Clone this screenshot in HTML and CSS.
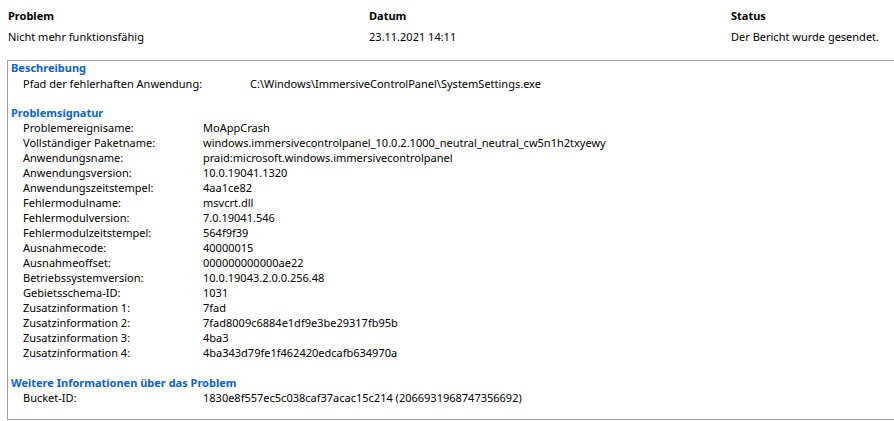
FILE: index.html
```html
<!DOCTYPE html>
<html lang="de">
<head>
<meta charset="utf-8">
<link rel="stylesheet" href="styles.css">
</head>
<body>
<div class="summary">
  <div class="col col-problem">
    <div class="head">Problem</div>
    <div class="val">Nicht mehr funktionsfähig</div>
  </div>
  <div class="col col-date">
    <div class="head">Datum</div>
    <div class="val">23.11.2021 14:11</div>
  </div>
  <div class="col col-status">
    <div class="head">Status</div>
    <div class="val">Der Bericht wurde gesendet.</div>
  </div>
</div>
<div class="details">
  <div class="section desc">
    <div class="title first">Beschreibung</div>
    <div class="row wide"><span class="label">Pfad der fehlerhaften Anwendung:</span><span class="value">C:\Windows\ImmersiveControlPanel\SystemSettings.exe</span></div>
  </div>
  <div class="section">
    <div class="title">Problemsignatur</div>
    <div class="row"><span class="label">Problemereignisame:</span><span class="value">MoAppCrash</span></div>
    <div class="row"><span class="label">Vollständiger Paketname:</span><span class="value">windows.immersivecontrolpanel_10.0.2.1000_neutral_neutral_cw5n1h2txyewy</span></div>
    <div class="row"><span class="label">Anwendungsname:</span><span class="value">praid:microsoft.windows.immersivecontrolpanel</span></div>
    <div class="row"><span class="label">Anwendungsversion:</span><span class="value">10.0.19041.1320</span></div>
    <div class="row"><span class="label">Anwendungszeitstempel:</span><span class="value">4aa1ce82</span></div>
    <div class="row"><span class="label">Fehlermodulname:</span><span class="value">msvcrt.dll</span></div>
    <div class="row"><span class="label">Fehlermodulversion:</span><span class="value">7.0.19041.546</span></div>
    <div class="row"><span class="label">Fehlermodulzeitstempel:</span><span class="value">564f9f39</span></div>
    <div class="row"><span class="label">Ausnahmecode:</span><span class="value">40000015</span></div>
    <div class="row"><span class="label">Ausnahmeoffset:</span><span class="value">000000000000ae22</span></div>
    <div class="row"><span class="label">Betriebssystemversion:</span><span class="value">10.0.19043.2.0.0.256.48</span></div>
    <div class="row"><span class="label">Gebietsschema-ID:</span><span class="value">1031</span></div>
    <div class="row"><span class="label">Zusatzinformation 1:</span><span class="value">7fad</span></div>
    <div class="row"><span class="label">Zusatzinformation 2:</span><span class="value">7fad8009c6884e1df9e3be29317fb95b</span></div>
    <div class="row"><span class="label">Zusatzinformation 3:</span><span class="value">4ba3</span></div>
    <div class="row"><span class="label">Zusatzinformation 4:</span><span class="value">4ba343d79fe1f462420edcafb634970a</span></div>
  </div>
  <div class="section">
    <div class="title">Weitere Informationen über das Problem</div>
    <div class="row"><span class="label">Bucket-ID:</span><span class="value">1830e8f557ec5c038caf37acac15c214 (2066931968747356692)</span></div>
  </div>
</div>
</body>
</html>
```
FILE: styles.css
```css
html, body {
  margin: 0;
  padding: 0;
  background: #ffffff;
  overflow: hidden;
}
body {
  width: 894px;
  height: 421px;
  font-family: "Noto Sans", "Open Sans", sans-serif;
  font-size: 11px;
  color: #000000;
}
.summary {
  display: grid;
  grid-template-columns: 361px 362px 1fr;
  padding: 8px 0 0 8px;
  height: 60px;
  box-sizing: border-box;
}
.head {
  font-weight: bold;
  line-height: 16px;
}
.val {
  margin-top: 5px;
  line-height: 16px;
}
.details {
  margin-left: 7px;
  width: 1000px;
  height: 360px;
  border: 1px solid #a0a0a0;
  border-right: none;
  box-sizing: border-box;
  padding: 0 0 0 3px;
}
.section {
  margin-bottom: 15px;
}
.section.desc {
  margin-bottom: 14px;
}
.title {
  color: #0a64c8;
  font-weight: bold;
  line-height: 15px;
}
.title.first {
  margin-top: -1px;
  margin-bottom: 1px;
}
.row {
  display: flex;
  line-height: 15px;
  padding-left: 12px;
}
.label {
  width: 180px;
  flex: none;
}
.row.wide .label {
  width: 227px;
}
.value {
  white-space: nowrap;
}
```
